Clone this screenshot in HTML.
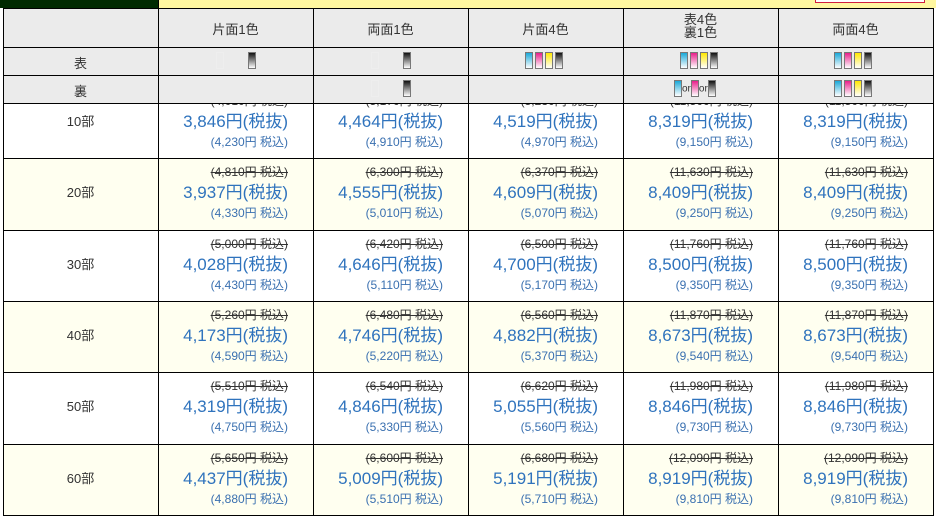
<!DOCTYPE html>
<html><head><meta charset="utf-8"><style>
*{margin:0;padding:0;box-sizing:border-box}
body{width:936px;height:516px;overflow:hidden;background:#fff;font-family:"Liberation Sans","Noto Sans CJK JP",sans-serif;position:relative;color:#333}
.a{position:absolute}
.hl,.vl{position:absolute;background:#000}
.c{position:absolute;text-align:center;font-size:13px;color:#333}
.p{position:absolute;text-align:right;width:129px;white-space:nowrap}
.s{font-size:12px;color:#333;text-decoration:line-through;line-height:16px}
.m{font-size:17px;color:#2f73bd;line-height:26px}
.b{font-size:12px;color:#3a70b0;line-height:14px}
.ink{display:inline-block;width:8px;height:17px;border:1px solid #777;vertical-align:middle;margin:0 1px}
.k{background:linear-gradient(#111,#fff)}
.cy{background:linear-gradient(#1aa8d8,#fff)}
.mg{background:linear-gradient(#e8208a,#fff)}
.ye{background:linear-gradient(#ffe800,#fff)}
.e{border-color:#eee;background:none}
.or{font-size:10px;vertical-align:middle;color:#333}
</style></head><body>
<div class="a" style="left:0;top:0;width:158px;height:8px;background:#002a00"></div>
<div class="a" style="left:158px;top:0;width:778px;height:8px;background:#fff7a0"></div>
<div id="rows"></div>
<script>
(function(){
var h='';
var rb=[103,158,230,301,372,444,515];
var cols=[3,158,313,468,623,778,933];
for(var i=0;i<6;i++){h+='<div class="a" style="left:3px;top:'+rb[i]+'px;width:930px;height:'+(rb[i+1]-rb[i])+'px;background:'+(i%2?'#fffff0':'#fff')+'"></div>';}
var data=[
['10部',[['(4,010円 税込)','3,846','(4,230円 税込)'],['(5,170円 税込)','4,464','(4,910円 税込)'],['(5,230円 税込)','4,519','(4,970円 税込)'],['(11,500円 税込)','8,319','(9,150円 税込)'],['(11,500円 税込)','8,319','(9,150円 税込)']]],
['20部',[['(4,810円 税込)','3,937','(4,330円 税込)'],['(6,300円 税込)','4,555','(5,010円 税込)'],['(6,370円 税込)','4,609','(5,070円 税込)'],['(11,630円 税込)','8,409','(9,250円 税込)'],['(11,630円 税込)','8,409','(9,250円 税込)']]],
['30部',[['(5,000円 税込)','4,028','(4,430円 税込)'],['(6,420円 税込)','4,646','(5,110円 税込)'],['(6,500円 税込)','4,700','(5,170円 税込)'],['(11,760円 税込)','8,500','(9,350円 税込)'],['(11,760円 税込)','8,500','(9,350円 税込)']]],
['40部',[['(5,260円 税込)','4,173','(4,590円 税込)'],['(6,480円 税込)','4,746','(5,220円 税込)'],['(6,560円 税込)','4,882','(5,370円 税込)'],['(11,870円 税込)','8,673','(9,540円 税込)'],['(11,870円 税込)','8,673','(9,540円 税込)']]],
['50部',[['(5,510円 税込)','4,319','(4,750円 税込)'],['(6,540円 税込)','4,846','(5,330円 税込)'],['(6,620円 税込)','5,055','(5,560円 税込)'],['(11,980円 税込)','8,846','(9,730円 税込)'],['(11,980円 税込)','8,846','(9,730円 税込)']]],
['60部',[['(5,650円 税込)','4,437','(4,880円 税込)'],['(6,600円 税込)','5,009','(5,510円 税込)'],['(6,680円 税込)','5,191','(5,710円 税込)'],['(12,090円 税込)','8,919','(9,810円 税込)'],['(12,090円 税込)','8,919','(9,810円 税込)']]]];
for(var i=0;i<6;i++){
 var ty=(i==0)?93:rb[i]+6;
 var mid=(i==0)?122:(rb[i]+rb[i+1])/2-1;
 h+='<div class="c" style="left:3px;width:155px;top:'+(mid-9)+'px;line-height:18px">'+data[i][0]+'</div>';
 for(var j=0;j<5;j++){var d=data[i][1][j];
  h+='<div class="p" style="left:'+(cols[j+1]+1)+'px;top:'+ty+'px"><div class="s">'+d[0]+'</div><div class="m">'+d[1]+'円(税抜)</div><div class="b">'+d[2]+'</div></div>';}
}
document.getElementById('rows').outerHTML=h;
})();
</script>
<div class="a" style="left:815px;top:0;width:110px;height:3px;border:1px solid #d02040;border-top:none;background:#fff"></div>
<div class="a" style="left:3px;top:8px;width:930px;height:95px;background:#ebebeb"></div>
<div class="c" style="left:158px;width:155px;top:19px">片面1色</div>
<div class="c" style="left:313px;width:155px;top:19px">両面1色</div>
<div class="c" style="left:468px;width:155px;top:19px">片面4色</div>
<div class="c" style="left:623px;width:155px;top:13px;line-height:13px">表4色<br>裏1色</div>
<div class="c" style="left:778px;width:155px;top:19px">両面4色</div>
<div class="c" style="left:3px;width:155px;top:53px">表</div>
<div class="c" style="left:3px;width:155px;top:81px">裏</div>
<div class="a" style="left:215px;top:52px"><span class="ink e"></span></div>
<div class="a" style="left:247px;top:52px"><span class="ink k"></span></div>
<div class="a" style="left:370px;top:52px"><span class="ink e"></span></div>
<div class="a" style="left:402px;top:52px"><span class="ink k"></span></div>
<div class="a" style="left:370px;top:80px"><span class="ink e"></span></div>
<div class="a" style="left:402px;top:80px"><span class="ink k"></span></div>
<div class="a" style="left:524px;top:52px"><span class="ink cy"></span><span class="ink mg"></span><span class="ink ye"></span><span class="ink k"></span></div>
<div class="a" style="left:679px;top:52px"><span class="ink cy"></span><span class="ink mg"></span><span class="ink ye"></span><span class="ink k"></span></div>
<div class="a" style="left:833px;top:52px"><span class="ink cy"></span><span class="ink mg"></span><span class="ink ye"></span><span class="ink k"></span></div>
<div class="a" style="left:833px;top:80px"><span class="ink cy"></span><span class="ink mg"></span><span class="ink ye"></span><span class="ink k"></span></div>
<div class="a" style="left:674px;top:80px;white-space:nowrap"><span class="ink cy" style="margin:0"></span><span class="or">or</span><span class="ink mg" style="margin:0"></span><span class="or">or</span><span class="ink k" style="margin:0"></span></div>
<script>
(function(){
var g='';var rl=[8,47,75,103,158,230,301,372,444,515];
for(var i=0;i<rl.length;i++)g+='<div class="hl" style="left:3px;top:'+rl[i]+'px;width:931px;height:1px"></div>';
var cl=[3,158,313,468,623,778,933];
for(var i=0;i<cl.length;i++)g+='<div class="vl" style="left:'+cl[i]+'px;top:8px;width:1px;height:508px"></div>';
g+='<div class="vl" style="left:158px;top:0;width:1px;height:8px"></div>';
document.body.insertAdjacentHTML('beforeend',g);
})();
</script>
</body></html>
